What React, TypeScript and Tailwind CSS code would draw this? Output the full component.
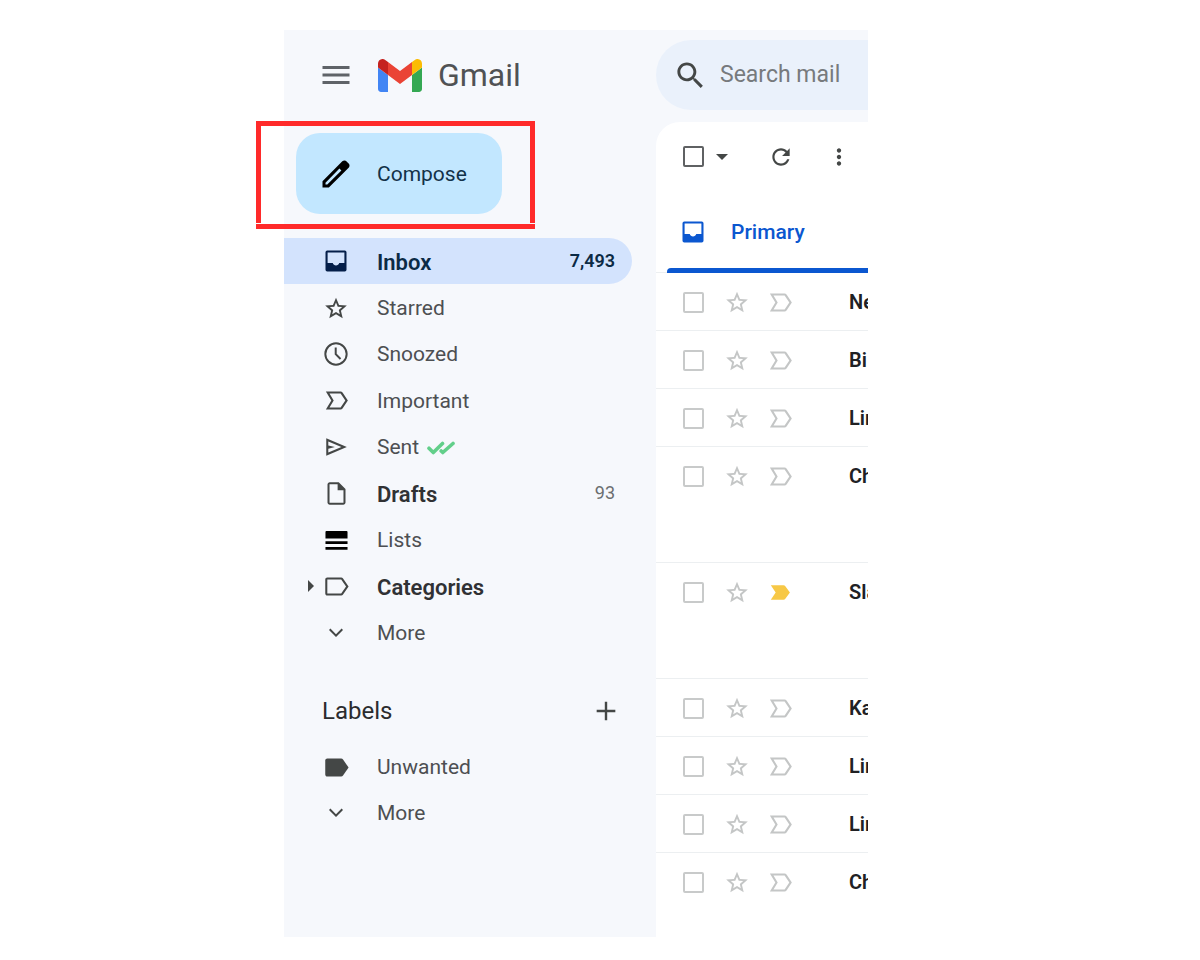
import React from 'react';
import clsx from 'clsx';

const paths = {
    menu: 'M3 18h18v-2H3v2zm0-5h18v-2H3v2zm0-7v2h18V6H3z',
    edit: 'M5 19h1.2L15.6 9.700 14.300 8.400 5 17.800V19zm-2 2v-4.250L16.200 3.575q.3-.275.663-.425t.762-.15.775.15.65.45L20.425 5q.3.275.438.65T21 6.400q0 .4-.138.763t-.437.662L7.250 21H3z',
    inbox: 'M4.500 3h15A1.500 1.500 0 0 1 21 4.500v15a1.500 1.500 0 0 1-1.500 1.500h-15A1.500 1.500 0 0 1 3 19.500v-15A1.500 1.500 0 0 1 4.500 3zM4.800 4.800v9h4.400c.4 1.200 1.500 2 2.800 2s2.400-.8 2.800-2h4.400v-9z',
    star: 'M22 9.740l-7.190-.620L12 2.500 9.190 9.130 2 9.740l5.460 4.730L5.820 21.500 12 17.770l6.180 3.730-1.630-7.030L22 9.740zM12 15.700l-3.500 2.100.93-4-3.100-2.680 4.080-.35L12 7l1.600 3.770 4.080.35-3.100 2.680.93 4L12 15.700z',
    clock: 'M11.990 2C6.470 2 2 6.480 2 12s4.470 10 9.990 10C17.520 22 22 17.520 22 12S17.520 2 11.990 2zM12 20.300a8.300 8.300 0 1 1 0-16.600 8.300 8.300 0 0 1 0 16.600zM12.600 6.500H10.900v6l4.400 4.400 1.200-1.200L12.600 11.800z',
    important: 'M3.200 4.500h12.200c.65 0 1.200.3 1.600.85L21.400 12 17 18.650c-.4.55-.95.85-1.600.85H3.200L7.700 12zM6.200 6.200L9.700 12 6.200 17.800h9.200L19.300 12 15.400 6.200z',
    importantFilled: 'M4 18l4-6-4-6h10.500c.600 0 1.100.300 1.500.800L19.800 12 16 17.200c-.400.500-.900.800-1.500.800z',
    sent: 'M3 20V4l19 8-19 8zm1.900-2.900L17 12 4.900 6.900v3.600L11 12l-6.100 1.500z',
    draft: 'M6 22q-.825 0-1.413-.588T4 20V4q0-.825.588-1.413T6 2h8l6 6v12q0 .825-.588 1.413T18 22H6zm7-13V3.800H5.800v16.400h12.400V9h-5.200z',
    lists: 'M3 4.500h18a.8.800 0 0 1 .8.800V11H2.200V5.300a.8.800 0 0 1 .8-.8zM2.200 13.500h19.600v2.400H2.200zM2.200 18.700h19.600v2.400H2.200z',
    category: 'M17.400 5.400C17 4.850 16.500 4.600 15.900 4.600H4.400c-1 0-1.700.75-1.700 1.700v11.400c0 .95.7 1.700 1.700 1.700h11.500c.6 0 1.100-.25 1.500-.8L22 12zM15.900 17.700H4.400V6.300h11.500L19.900 12z',
    label: 'M17.400 5.400C17 4.850 16.500 4.600 15.900 4.600H4.400c-1 0-1.700.75-1.700 1.700v11.400c0 .95.7 1.700 1.700 1.700h11.500c.6 0 1.100-.25 1.500-.8L22 12z',
    more: 'M16.800 8.200L12 13 7.200 8.200 6 9.400l6 6 6-6z',
    plus: 'M19 12.900h-6.100V19h-1.800v-6.100H5v-1.800h6.100V5h1.800v6.100H19z',
    search: 'M15.500 14h-.790l-.280-.270C15.410 12.590 16 11.110 16 9.500 16 5.910 13.090 3 9.500 3S3 5.910 3 9.500 5.910 16 9.500 16c1.610 0 3.090-.590 4.230-1.570l.270.280v.790l5 4.990L20.490 19l-4.990-5zm-6 0C7.010 14 5 11.990 5 9.500S7.010 5 9.500 5 14 7.010 14 9.500 11.990 14 9.500 14z',
    refresh: 'M17.650 6.350C16.200 4.900 14.210 4 12 4c-4.420 0-7.990 3.580-7.990 8s3.570 8 7.990 8c3.730 0 6.840-2.550 7.730-6h-2.080c-.820 2.330-3.040 4-5.650 4-3.310 0-6-2.690-6-6s2.690-6 6-6c1.660 0 3.140.690 4.220 1.780L13 11h7V4l-2.350 2.350z',
    dots: 'M12 8c1.100 0 2-.900 2-2s-.900-2-2-2-2 .900-2 2 .900 2 2 2zm0 2c-1.100 0-2 .900-2 2s.900 2 2 2 2-.900 2-2-.900-2-2-2zm0 6c-1.100 0-2 .900-2 2s.900 2 2 2 2-.900 2-2-.900-2-2-2z',
};

type IconName = keyof typeof paths;

const Icon = ({ name, className }: { name: IconName, className: string }) => (
    <svg viewBox="0 0 24 24" fill="currentColor" fillRule="evenodd" aria-hidden="true" className={`shrink-0 ${className}`}>
        <path d={paths[name]} />
    </svg>
);

const GmailLogo = () => (
    <svg viewBox="52 42 88 66" aria-hidden="true" className="h-[33px] w-11">
        <path fill="#4285f4" d="M58 108h14V74L52 59v43c0 3.320 2.690 6 6 6" />
        <path fill="#34a853" d="M120 108h14c3.320 0 6-2.690 6-6V59l-20 15" />
        <path fill="#fbbc04" d="M120 48v26l20-15v-8c0-7.420-8.470-11.650-14.400-7.200" />
        <path fill="#ea4335" d="M72 74V48l24 18 24-18v26L96 92" />
        <path fill="#c5221f" d="M52 51v8l20 15V48l-5.600-4.200c-5.940-4.450-14.400-.220-14.400 7.200" />
    </svg>
);

const DoubleCheck = () => (
    <svg viewBox="0 0 28 14" fill="none" stroke="#62cf8a" strokeWidth="3.600" strokeLinecap="round" strokeLinejoin="round" aria-hidden="true" className="mt-0.5 ml-2 h-3.5 w-7">
        <path d="M2 7.200l4.300 4.300L15.500 2.500M14.200 10l1.600 1.500L26 2.500" />
    </svg>
);

interface NavItem {
    label: string;
    icon: IconName;
    iconSize: string;
    count?: string;
    active?: boolean;
    bold?: boolean;
    expandable?: boolean;
    tracked?: boolean;
}

const folders: NavItem[] = [
    { label: 'Inbox', icon: 'inbox', iconSize: 'size-7 text-[#041e49]', count: '7,493', active: true },
    { label: 'Starred', icon: 'star', iconSize: 'size-[26px]' },
    { label: 'Snoozed', icon: 'clock', iconSize: 'size-7' },
    { label: 'Important', icon: 'important', iconSize: 'size-[29px]' },
    { label: 'Sent', icon: 'sent', iconSize: 'size-[26px]', tracked: true },
    { label: 'Drafts', icon: 'draft', iconSize: 'size-[27px]', count: '93', bold: true },
    { label: 'Lists', icon: 'lists', iconSize: 'size-[27px] text-black' },
    { label: 'Categories', icon: 'category', iconSize: 'size-[29px]', bold: true, expandable: true },
    { label: 'More', icon: 'more', iconSize: 'size-7' },
];

const labels: NavItem[] = [
    { label: 'Unwanted', icon: 'label', iconSize: 'size-[29px]' },
    { label: 'More', icon: 'more', iconSize: 'size-7' },
];

const mails = [
    { sender: 'Ne' },
    { sender: 'Bi' },
    { sender: 'Lin' },
    { sender: 'Ch', tall: true },
    { sender: 'Sla', tall: true, important: true },
    { sender: 'Ka' },
    { sender: 'Lin' },
    { sender: 'Lin' },
    { sender: 'Ch' },
];

const NavLink = ({ item }: { item: NavItem }) => (
    <li className="grid">
        <a
            href="#"
            className={clsx(
                'flex items-center rounded-r-full pr-[17px]',
                item.active ? 'bg-[#d3e3fd] text-[#0b2a45]' : 'text-[#4d4f52]',
                item.bold && 'text-[#303134]',
                item.active || item.bold ? 'text-[22px] font-semibold' : 'text-[21px]'
            )}
        >
            <span className="flex w-8 justify-end pr-0.5">
                {item.expandable &&
                    <svg viewBox="0 0 6 12" fill="#444746" aria-hidden="true" className="h-3 w-1.5">
                        <path d="M0 0l6 6-6 6z" />
                    </svg>
                }
            </span>
            <span className="mr-[21px] flex w-10 justify-center text-[#444746]">
                <Icon name={item.icon} className={item.iconSize} />
            </span>
            <span className="pt-0.5">{item.label}</span>
            {item.tracked && <DoubleCheck />}
            {item.count &&
                <span className={clsx('ml-auto text-lg', !item.active && 'font-normal text-[#6b6e70]')}>
                    {item.count}
                </span>
            }
        </a>
    </li>
);

const Sidebar = () => (
    <aside className="w-[372px] shrink-0">
        <header className="flex h-[91px] items-center pb-px pl-[34px]">
            <button type="button" aria-label="Main menu" className="text-[#5f6368]">
                <Icon name="menu" className="size-9" />
            </button>
            <a href="#" className="ml-6 flex items-center gap-4 text-[32px] leading-10 text-[#505254]">
                <GmailLogo />
                Gmail
            </a>
        </header>

        <div className="relative mt-3 mb-6 ml-3 w-[206px]">
            <button type="button" className="flex h-[81px] w-full items-center rounded-3xl bg-[#c2e7ff] pl-[22px] text-[21px] text-[#123249]">
                <Icon name="edit" className="mr-[23px] size-9 text-black" />
                <span className="pt-0.5">Compose</span>
            </button>
            <div className="pointer-events-none absolute -top-3 -right-[33px] -bottom-[15px] -left-10 flex flex-col gap-px">
                <div className="grow border-x-5 border-t-5 border-[#ff2a2a]" />
                <div className="h-[5px] bg-[#ff2a2a]" />
            </div>
        </div>

        <nav aria-label="Folders" className="mr-6">
            <ul className="grid h-[418px] auto-rows-fr">
                {folders.map(item => <NavLink key={item.label} item={item} />)}
            </ul>
        </nav>

        <div className="mt-5 mr-6 flex h-[68px] items-center justify-between pt-0.5 pr-[10px] pl-[38px]">
            <h2 className="text-2xl text-[#2b2c2e]">Labels</h2>
            <button type="button" aria-label="Create new label" className="text-[#444746]">
                <Icon name="plus" className="size-8" />
            </button>
        </div>
        <nav aria-label="Labels" className="mr-6">
            <ul className="grid h-[92px] auto-rows-fr">
                {labels.map(item => <NavLink key={item.label} item={item} />)}
            </ul>
        </nav>
    </aside>
);

const Toolbar = () => (
    <div className="flex h-[70px] items-center pb-px pl-[27px] text-[#444746]">
        <input type="checkbox" aria-label="Select all" className="size-[21px] shrink-0 appearance-none rounded-xs border-2 border-[#5f6163]" />
        <button type="button" aria-label="Select options" className="ml-3">
            <svg viewBox="0 0 12 6" fill="currentColor" aria-hidden="true" className="h-1.5 w-3">
                <path d="M0 0h12L6 6z" />
            </svg>
        </button>
        <button type="button" aria-label="Refresh" className="ml-10">
            <Icon name="refresh" className="size-[26px]" />
        </button>
        <button type="button" aria-label="More options" className="ml-8">
            <Icon name="dots" className="size-[26px]" />
        </button>
    </div>
);

const MailRow = ({ sender, tall, important }: { sender: string, tall?: boolean, important?: boolean }) => (
    <li className={clsx('border-t border-[#eceff1]', tall ? 'h-29' : 'h-[58px]')}>
        <div className="flex h-[58px] items-center pl-[27px] text-[#c4c6c6]">
            <input type="checkbox" aria-label={`Select ${sender}`} className="size-[21px] shrink-0 appearance-none rounded-xs border-2 border-[#c8caca]" />
            <button type="button" aria-label="Star" className="ml-5">
                <Icon name="star" className="size-[26px]" />
            </button>
            <button type="button" aria-label="Important" className="ml-4">
                <Icon
                    name={important ? 'importantFilled' : 'important'}
                    className={clsx('size-[29px]', important && 'text-[#f7c846]')}
                />
            </button>
            <span className="ml-[54px] text-xl font-semibold whitespace-nowrap text-[#202124]">{sender}</span>
        </div>
    </li>
);

const MailPanel = () => (
    <main className="min-w-0 grow overflow-hidden pt-[10px]">
        <label className="flex h-[70px] items-center rounded-l-full bg-[#eaf1fb] pl-[17px] text-[#444746]">
            <Icon name="search" className="size-[35px]" />
            <input
                type="text"
                aria-label="Search mail"
                placeholder="Search mail"
                className="ml-3 w-full min-w-0 bg-transparent text-[23px] outline-none placeholder:text-[#777a7d]"
            />
        </label>
        <section className="mt-3 h-[815px] rounded-tl-3xl bg-white">
            <Toolbar />
            <div role="tablist" className="h-20 pl-[11px]">
                <button type="button" role="tab" aria-selected="true" className="relative flex h-20 w-full items-center pl-3 text-[21px] font-medium text-[#0b57d0]">
                    <Icon name="inbox" className="size-7" />
                    <span className="ml-6 pt-0.5">Primary</span>
                    <span className="absolute inset-x-0 -bottom-px h-[5px] rounded-tl-sm bg-[#0b57d0]" />
                </button>
            </div>
            <ul>
                {mails.map((mail, index) => <MailRow key={index} {...mail} />)}
            </ul>
        </section>
    </main>
);

export default function App() {
    return (
        <div className="flex min-h-screen items-start justify-center bg-white pt-[30px] pr-12 font-['Roboto',sans-serif]">
            <div className="flex w-full max-w-[584px] bg-[#f6f8fc]">
                <Sidebar />
                <MailPanel />
            </div>
        </div>
    );
}
